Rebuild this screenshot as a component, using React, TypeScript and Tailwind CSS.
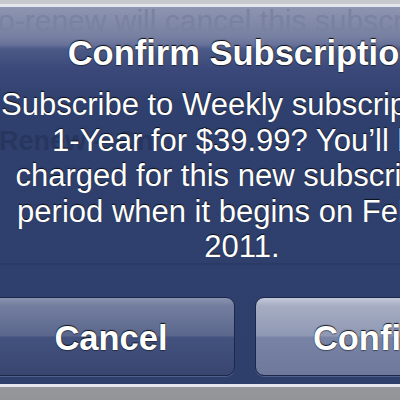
import React from "react";

const font = "font-['Liberation_Sans','Helvetica','Arial',sans-serif]";

function AlertButton({ label, light }: { label: string; light?: boolean }) {
  return (
    <button
      className={
        "flex h-[79px] flex-1 items-center justify-center rounded-[9px] border border-[#1c2749] pt-[3px] text-[34.5px] font-bold leading-[40px] text-white shadow-[0_1px_0_rgba(140,155,200,0.35)] [text-shadow:0_-1px_1px_rgba(0,0,0,0.85),0_1px_1px_rgba(0,0,0,0.45)] " +
        (light
          ? "bg-[linear-gradient(to_bottom,#c3c8d8_0px,#a6adc3_8px,#8f98b4_38px,#7883a5_39px,#6d789b_78px)]"
          : "bg-[linear-gradient(to_bottom,#8a93b0_0px,#737e9f_8px,#5a668c_38px,#44527f_39px,#37456f_78px)]")
      }
    >
      {label}
    </button>
  );
}

export default function App() {
  return (
    <div
      className={
        "relative h-[400px] w-[400px] overflow-hidden bg-[linear-gradient(to_bottom,#c8c9cd,#b4b5b9_50%,#939497)] " +
        font
      }
    >
      {/* alert sheet over the dimmed page */}
      <div className="absolute left-[-33px] top-[4px] h-[383px] w-[556px] overflow-hidden rounded-[14px] border-[3px] border-[#e4e6ee]">
        <div className="relative flex h-full flex-col bg-[linear-gradient(to_bottom,#8e95b0_0px,#7780a1_30px,#67719a_38px,#4b5985_42px,#3a497a_62px,#30406e_95px,#2f3f6c_100%)] px-[17px] pb-[8px] pt-[26px]">
          {/* page text showing through the translucent sheet */}
          <span className="absolute left-[-17px] top-[-6px] whitespace-nowrap text-[30px] leading-[40px] text-[#7a82a1]">
            Auto-renew will cancel this subscription
          </span>
          <span className="absolute left-[29px] top-[117px] whitespace-nowrap text-[27px] font-bold leading-[34px] text-[#27365f]">
            Renew – On
          </span>
          <div className="absolute left-0 right-0 top-[256px] h-[2px] bg-[#2a3a66]" />

          <h1 className="relative mr-[2px] whitespace-nowrap text-center text-[34.5px] font-bold leading-[40px] text-white [text-shadow:0_-1px_1px_rgba(0,0,0,0.9),0_1px_1px_rgba(0,0,0,0.5)]">
            Confirm Subscription
          </h1>
          <p className="relative mr-[6px] mt-[14px] whitespace-nowrap text-center text-[31px] leading-[35.5px] text-white [text-shadow:0_-1px_1px_rgba(0,0,0,0.8)]">
            Subscribe to Weekly subscription –
            <br />
            1-Year for $39.99? You’ll be
            <br />
            charged for this new subscription
            <br />
            period when it begins on Feb 14,
            <br />
            2011.
          </p>
          <div className="relative mt-auto flex gap-[20px]">
            <AlertButton label="Cancel" />
            <AlertButton label="Confirm" light />
          </div>
        </div>
      </div>
    </div>
  );
}
